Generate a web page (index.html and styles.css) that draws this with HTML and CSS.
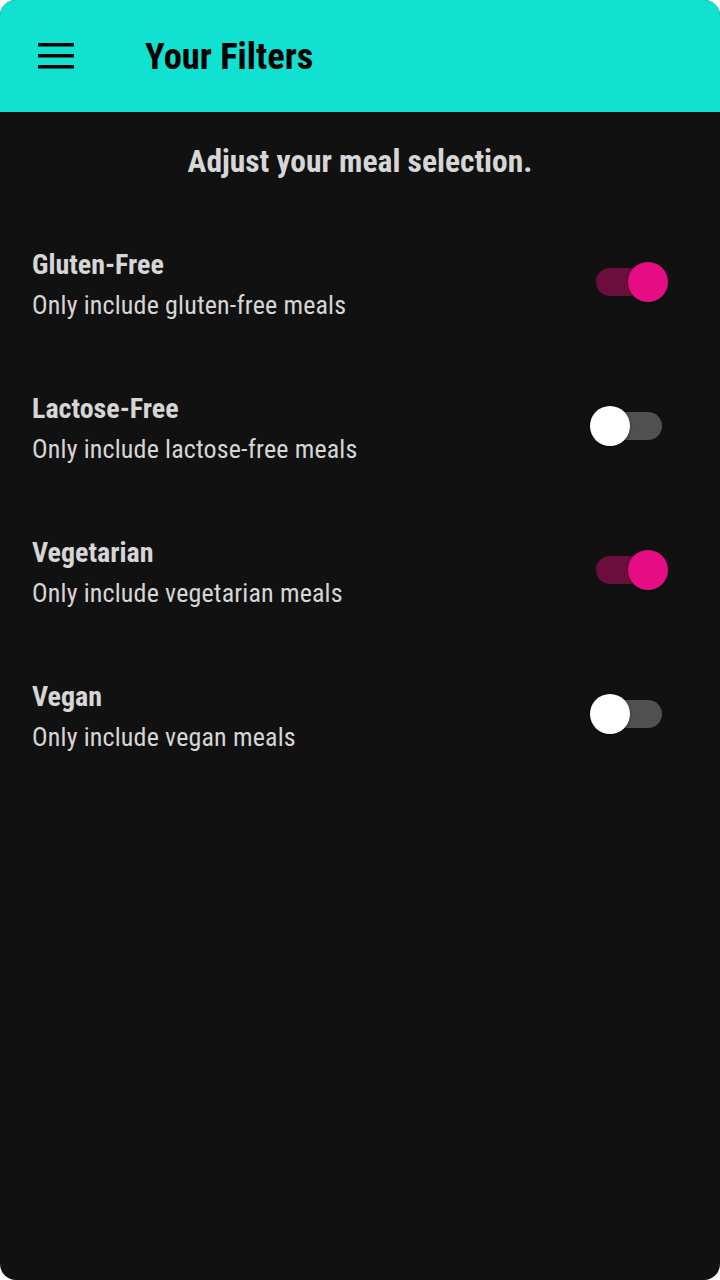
FILE: index.html
```html
<!DOCTYPE html>
<html>
<head>
<meta charset="utf-8">
<link rel="stylesheet" href="styles.css">
</head>
<body>
<div class="screen">
  <header class="appbar">
    <button class="menu" aria-label="Menu">
      <svg width="36" height="26" viewBox="0 0 36 26"><rect x="0" y="0" width="36" height="3.5" fill="#000"/><rect x="0" y="11" width="36" height="3.5" fill="#000"/><rect x="0" y="22" width="36" height="3.5" fill="#000"/></svg>
    </button>
    <h1 class="title">Your Filters</h1>
  </header>
  <main class="content">
    <h2 class="intro">Adjust your meal selection.</h2>
    <ul class="filters">
      <li class="filter">
        <div class="text"><div class="name">Gluten-Free</div><div class="desc">Only include gluten-free meals</div></div>
        <span class="switch on"><span class="track"></span><span class="thumb"></span></span>
      </li>
      <li class="filter">
        <div class="text"><div class="name">Lactose-Free</div><div class="desc">Only include lactose-free meals</div></div>
        <span class="switch"><span class="track"></span><span class="thumb"></span></span>
      </li>
      <li class="filter">
        <div class="text"><div class="name">Vegetarian</div><div class="desc">Only include vegetarian meals</div></div>
        <span class="switch on"><span class="track"></span><span class="thumb"></span></span>
      </li>
      <li class="filter">
        <div class="text"><div class="name">Vegan</div><div class="desc">Only include vegan meals</div></div>
        <span class="switch"><span class="track"></span><span class="thumb"></span></span>
      </li>
    </ul>
  </main>
</div>
</body>
</html>
```
FILE: styles.css
```css
html, body { margin: 0; padding: 0; background: #fff; }
body { font-family: "Roboto Condensed", Roboto, sans-serif; }
.screen {
  width: 720px; height: 1280px; background: #111111;
  border-radius: 16px; overflow: hidden;
  display: flex; flex-direction: column;
}
.appbar {
  height: 112px; background: #10e1d0;
  display: flex; align-items: center;
  padding: 0 0 0 38px; box-sizing: border-box;
}
.menu { background: none; border: 0; padding: 0; margin: 0; width: 36px; height: 26px; display: block; }
.menu svg { display: block; }
.title {
  margin: 0 0 0 71px; font-size: 36.5px; font-weight: 700; color: #000;
  font-stretch: condensed;
}
.content { flex: 1; }
.intro {
  margin: 0; height: 98px; display: flex; align-items: center; justify-content: center;
  font-size: 31.5px; font-weight: 700; color: #d6d6d6; font-stretch: condensed;
}
.filters { list-style: none; margin: 0; padding: 0; }
.filter {
  height: 144px; display: flex; align-items: center; justify-content: space-between;
  padding: 0 52px 0 32px; box-sizing: border-box;
}
.text { display: flex; flex-direction: column; gap: 8px; padding-top: 5px; }
.name { font-size: 28px; font-weight: 700; color: #d6d6d6; line-height: 32px; font-stretch: condensed; }
.desc { font-size: 26px; font-weight: 400; color: #d6d6d6; line-height: 32px; font-stretch: condensed; letter-spacing: 0.15px; }
.switch { position: relative; width: 78px; height: 40px; display: block; flex: none; }
.track {
  position: absolute; left: 6px; top: 6px; width: 66px; height: 28px; border-radius: 14px;
  background: #505050;
}
.thumb {
  position: absolute; left: 0; top: 0; width: 40px; height: 40px; border-radius: 50%;
  background: #fff; box-shadow: 0 1px 3px rgba(0,0,0,0.5);
}
.switch.on .track { background: #6b0e3e; }
.switch.on .thumb { left: 38px; background: #e50c84; }
```
